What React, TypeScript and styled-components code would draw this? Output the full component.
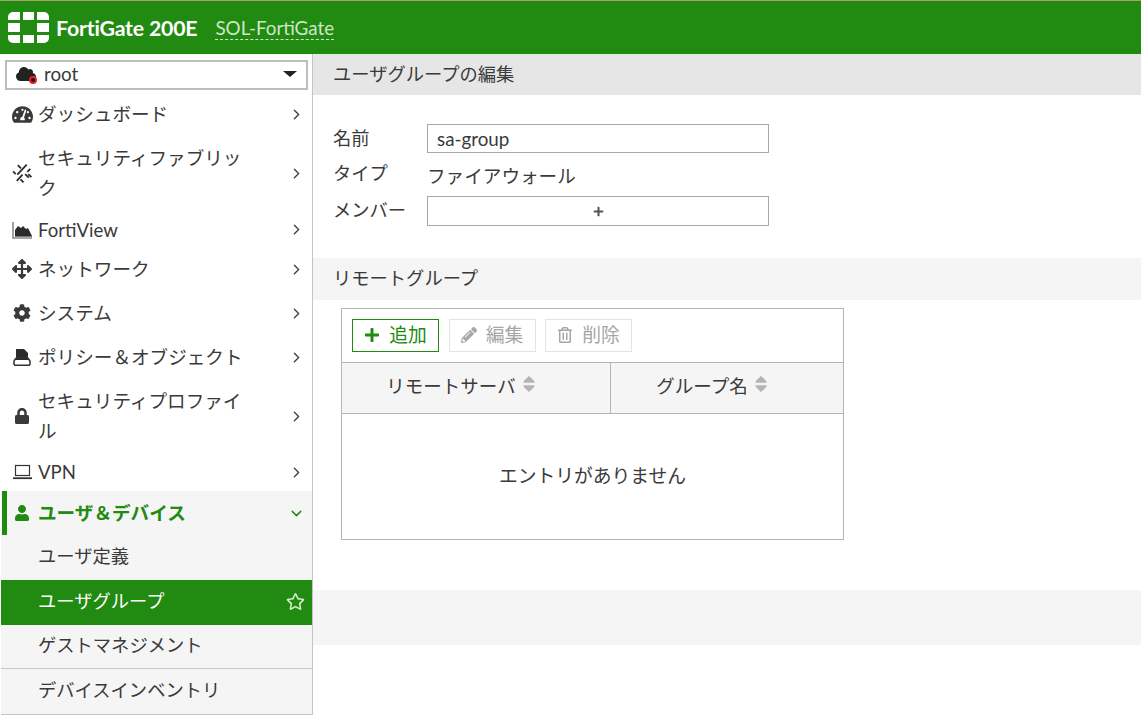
import React from "react";
import styled, { createGlobalStyle } from "styled-components";
import {
  FaArrowsAlt,
  FaCloud,
  FaCog,
  FaLock,
  FaPencilAlt,
  FaPlus,
  FaRegStar,
  FaRegTrashAlt,
  FaSort,
  FaTachometerAlt,
  FaUser,
} from "react-icons/fa";
import { ChevronDown, ChevronRight } from "lucide-react";

const green = "#218a10";
const text = "#3a3a3a";

const GlobalStyle = createGlobalStyle`
  html, body {
    margin: 0;
    padding: 0;
    background: #fff;
  }
  body {
    font-family: Lato, "Noto Sans CJK JP", sans-serif;
    font-size: 18.3px;
    line-height: 30px;
    color: ${text};
  }
`;

const Page = styled.div`
  width: 1141px;
  height: 716px;
  overflow: hidden;
  display: flex;
  flex-direction: column;
`;

const Header = styled.header`
  height: 53px;
  flex: none;
  display: flex;
  align-items: center;
  padding-left: 8px;
  background: ${green};
  border-top: 1px solid #a9a06a;
`;

const LogoMark = styled.svg`
  width: 41px;
  height: 31px;
  margin: 0 7px 0 0;
  flex: none;
`;

const Product = styled.span`
  font-size: 21.3px;
  font-weight: 700;
  color: #fff;
  letter-spacing: -0.2px;
`;

const HostName = styled.span`
  margin-left: 18px;
  font-size: 18.8px;
  line-height: 23px;
  color: #cfe6ca;
  border-bottom: 1px dashed #cfe6ca;
`;

const Body = styled.div`
  flex: 1;
  display: flex;
  min-height: 0;
`;

const Sidebar = styled.nav`
  width: 311px;
  flex: none;
  align-self: flex-start;
  padding-top: 6px;
  border-right: 1px solid #c4c4c4;
  border-bottom: 1px solid #c4c4c4;
  margin-left: 1px;
  display: flex;
  flex-direction: column;
`;

const Select = styled.div`
  height: 24px;
  margin: 0 4px 4px 4px;
  padding: 0 9px 2px 9px;
  border: 2px solid #bdbdbd;
  display: flex;
  align-items: center;
  gap: 8px;
  font-size: 18.8px;
`;

const CloudIcon = styled.span`
  position: relative;
  display: inline-flex;
  font-size: 20px;
  color: #222;

  &::after {
    content: "";
    position: absolute;
    right: -1px;
    bottom: 0;
    width: 8px;
    height: 8px;
    border-radius: 50%;
    background: #111;
    border: 2.5px solid #e8212b;
    box-sizing: border-box;
  }
`;

const Caret = styled.span`
  margin-left: auto;
  width: 0;
  height: 0;
  border-left: 7px solid transparent;
  border-right: 7px solid transparent;
  border-top: 6px solid #222;
`;

const NavRow = styled.div<{ $h: number; $open?: boolean }>`
  height: ${(p) => p.$h}px;
  flex: none;
  display: flex;
  align-items: center;
  padding-right: 7px;
  font-size: 18.6px;
  position: relative;
  background: ${(p) => (p.$open ? "#f5f5f5" : "transparent")};
  color: ${(p) => (p.$open ? green : text)};
  font-weight: ${(p) => (p.$open ? 700 : 400)};

  ${(p) =>
    p.$open &&
    `&::before {
      content: "";
      position: absolute;
      left: 1px;
      top: 0;
      bottom: 0;
      width: 5px;
      background: ${green};
    }`}
`;

const NavIcon = styled.span<{ $size?: number }>`
  width: 37px;
  flex: none;
  display: flex;
  justify-content: center;
  padding-left: 5px;
  box-sizing: border-box;
  font-size: ${(p) => p.$size ?? 18}px;
`;

const NavLabel = styled.span`
  flex: 1;
  max-width: 212px;
`;

const Chevron = styled(ChevronRight)`
  margin-left: auto;
  width: 17px;
  height: 17px;
  color: #444;
  stroke-width: 2;
`;

const OpenChevron = styled(ChevronDown)`
  margin-left: auto;
  width: 17px;
  height: 17px;
  color: ${green};
`;

const SubRow = styled.div<{ $active?: boolean; $h: number; $rule?: boolean }>`
  height: ${(p) => p.$h}px;
  flex: none;
  box-sizing: border-box;
  display: flex;
  align-items: center;
  justify-content: space-between;
  padding: 0 7px 3px 37px;
  background: ${(p) => (p.$active ? green : "#f5f5f5")};
  color: ${(p) => (p.$active ? "#fff" : text)};
  border-top: ${(p) => (p.$rule ? "1px solid #c8c8c8" : "none")};
`;

const Main = styled.main`
  flex: 1;
  min-width: 0;
  display: flex;
  flex-direction: column;
`;

const TitleBar = styled.div`
  height: 41px;
  flex: none;
  box-sizing: border-box;
  display: flex;
  align-items: center;
  padding: 0 0 2px 20px;
  background: #e6e6e6;
`;

const Form = styled.div`
  margin: 29px 0 0 20px;
  display: grid;
  grid-template-columns: 94px 342px;
  grid-template-rows: 29px 33px 30px;
  row-gap: 5px;
  align-items: center;
`;

const Label = styled.div<{ $lift?: boolean }>`
  padding-bottom: ${(p) => (p.$lift ? 3 : 2)}px;
`;

const TextInput = styled.div`
  height: 29px;
  box-sizing: border-box;
  padding-left: 9px;
  display: flex;
  align-items: center;
  border: 1px solid #a8a8a8;
  font-size: 18.8px;
`;

const PlainValue = styled.div`
  padding-top: 3px;
  font-size: 18.6px;
`;

const AddMember = styled.div`
  height: 30px;
  box-sizing: border-box;
  display: flex;
  align-items: center;
  justify-content: center;
  border: 1px solid #a8a8a8;
  font-size: 11px;
  color: #555;
`;

const SectionBar = styled.div`
  margin-top: 32px;
  height: 42px;
  flex: none;
  box-sizing: border-box;
  display: flex;
  align-items: center;
  padding: 0 0 2px 20px;
  background: #f5f5f5;
`;

const Table = styled.div`
  width: 501px;
  margin: 8px 0 0 28px;
  border: 1px solid #b4b4b4;
  flex: none;
`;

const Toolbar = styled.div`
  height: 53px;
  display: flex;
  align-items: flex-start;
  gap: 9.5px;
  padding: 10px 0 0 10px;
  box-sizing: border-box;
`;

const ToolButton = styled.div<{ $primary?: boolean }>`
  width: 87px;
  height: 33px;
  box-sizing: border-box;
  display: flex;
  align-items: center;
  justify-content: center;
  gap: 9px;
  padding-bottom: 2px;
  border: 1px solid ${(p) => (p.$primary ? green : "#e4e4e4")};
  color: ${(p) => (p.$primary ? green : "#a6a6a6")};
  font-size: 18.8px;

  svg {
    font-size: 16px;
  }
`;

const HeadRow = styled.div`
  height: 50px;
  display: grid;
  grid-template-columns: 268px 1fr;
  background: #f5f5f5;
  border-top: 1px solid #b4b4b4;
  border-bottom: 1px solid #b4b4b4;
`;

const HeadCell = styled.div`
  display: flex;
  align-items: center;
  justify-content: center;
  gap: 3px;
  padding: 0 27px 4px 0;
  font-size: 18.5px;

  & + & {
    border-left: 1px solid #b4b4b4;
  }

  svg {
    font-size: 20px;
    color: #b4b4b4;
    margin-top: -4px;
  }
`;

const EmptyRow = styled.div`
  height: 125px;
  box-sizing: border-box;
  display: flex;
  align-items: center;
  justify-content: center;
  padding-bottom: 2px;
  font-size: 18.8px;
`;

const FooterBand = styled.div`
  margin-top: 50px;
  height: 55px;
  flex: none;
  background: #f5f5f5;
`;

const Logo = () => (
  <LogoMark viewBox="0 0 41 31" fill="#fff">
    <path d="M5 0h7v8H0V5a5 5 0 0 1 5-5z" />
    <rect x="15" y="0" width="11" height="8" />
    <path d="M29 0h7a5 5 0 0 1 5 5v3H29z" />
    <rect x="0" y="11" width="12" height="9" />
    <rect x="29" y="11" width="12" height="9" />
    <path d="M0 23h12v8H5a5 5 0 0 1-5-5z" />
    <rect x="15" y="23" width="11" height="8" />
    <path d="M29 23h12v3a5 5 0 0 1-5 5h-7z" />
  </LogoMark>
);

const FabricIcon = () => (
  <svg width="22" height="21" viewBox="0 0 21 20" fill="none" stroke="#2b2b2b" strokeWidth="1.7">
    <path d="M6.5 2l3 3M15 1.5l-9 9.5M18.5 5.5l-3 3M2 8l2.5 2.5M16.5 10.5l3 3M11 11l-5.5 6M13.5 10.5l3.5 3.5M9 15.5l3 3" />
  </svg>
);

const ViewIcon = () => (
  <svg width="21" height="18" viewBox="0 0 21 18">
    <path d="M1 1v16h19" fill="none" stroke="#8a8a8a" strokeWidth="1.6" />
    <path d="M3 15V9l3-4 3 2 2-2 3 3 2-1 4 8z" fill="#2b2b2b" />
    <path d="M3 15h17v1H3z" fill="#777" />
  </svg>
);

const PolicyIcon = () => (
  <svg width="20" height="19" viewBox="0 0 20 19">
    <path d="M4 1h8l4 4v7H4z" fill="#2b2b2b" />
    <path d="M4 10h12M2 17v-4l2-3M18 17v-4l-2-3M2 17.2h16" fill="none" stroke="#333" strokeWidth="1.5" />
    <rect x="4" y="12" width="12" height="4" fill="#fff" />
  </svg>
);

const LaptopIcon = () => (
  <svg width="21" height="16" viewBox="0 0 21 16" fill="none" stroke="#333" strokeWidth="1.2">
    <rect x="3.5" y="1.5" width="14" height="10" />
    <path d="M1 14.2h19" strokeWidth="1.8" />
  </svg>
);

const menu = [
  { label: "ダッシュボード", h: 40, size: 21, icon: <FaTachometerAlt /> },
  { label: "セキュリティファブリック", h: 78, icon: <FabricIcon /> },
  { label: "FortiView", h: 35, icon: <ViewIcon /> },
  { label: "ネットワーク", h: 44, size: 20, icon: <FaArrowsAlt /> },
  { label: "システム", h: 44, icon: <FaCog /> },
  { label: "ポリシー＆オブジェクト", h: 44, icon: <PolicyIcon /> },
  { label: "セキュリティプロファイル", h: 74, size: 16, icon: <FaLock /> },
  { label: "VPN", h: 38, icon: <LaptopIcon /> },
];

export default function App() {
  return (
    <Page>
      <GlobalStyle />
      <Header>
        <Logo />
        <Product>FortiGate 200E</Product>
        <HostName>SOL-FortiGate</HostName>
      </Header>
      <Body>
        <Sidebar>
          <Select>
            <CloudIcon>
              <FaCloud />
            </CloudIcon>
            root
            <Caret />
          </Select>
          {menu.map((item) => (
            <NavRow key={item.label} $h={item.h}>
              <NavIcon $size={item.size}>{item.icon}</NavIcon>
              <NavLabel>{item.label}</NavLabel>
              <Chevron />
            </NavRow>
          ))}
          <NavRow $h={44} $open>
            <NavIcon $size={16}>
              <FaUser />
            </NavIcon>
            <NavLabel>ユーザ＆デバイス</NavLabel>
            <OpenChevron />
          </NavRow>
          <SubRow $h={45}>ユーザ定義</SubRow>
          <SubRow $h={45} $active>
            ユーザグループ
            <FaRegStar size={19} color="#d5ecd0" />
          </SubRow>
          <SubRow $h={43}>ゲストマネジメント</SubRow>
          <SubRow $h={46} $rule>
            デバイスインベントリ
          </SubRow>
        </Sidebar>
        <Main>
          <TitleBar>ユーザグループの編集</TitleBar>
          <Form>
            <Label>名前</Label>
            <TextInput>sa-group</TextInput>
            <Label $lift>タイプ</Label>
            <PlainValue>ファイアウォール</PlainValue>
            <Label>メンバー</Label>
            <AddMember>
              <FaPlus />
            </AddMember>
          </Form>
          <SectionBar>リモートグループ</SectionBar>
          <Table>
            <Toolbar>
              <ToolButton $primary>
                <FaPlus />
                追加
              </ToolButton>
              <ToolButton>
                <FaPencilAlt />
                編集
              </ToolButton>
              <ToolButton>
                <FaRegTrashAlt />
                削除
              </ToolButton>
            </Toolbar>
            <HeadRow>
              <HeadCell>
                リモートサーバ
                <FaSort />
              </HeadCell>
              <HeadCell>
                グループ名
                <FaSort />
              </HeadCell>
            </HeadRow>
            <EmptyRow>エントリがありません</EmptyRow>
          </Table>
          <FooterBand />
        </Main>
      </Body>
    </Page>
  );
}
